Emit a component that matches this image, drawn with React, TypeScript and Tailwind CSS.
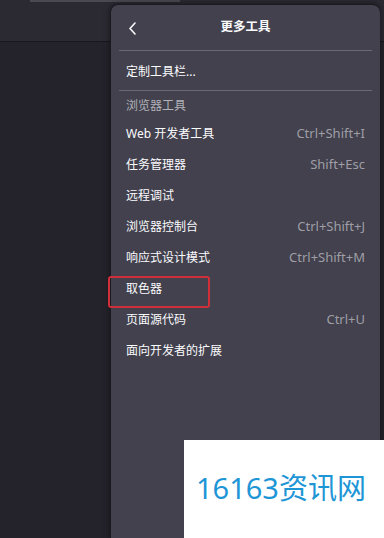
const items = [
  { label: 'Web 开发者工具', key: 'Ctrl+Shift+I' },
  { label: '任务管理器', key: 'Shift+Esc' },
  { label: '远程调试', key: '' },
  { label: '浏览器控制台', key: 'Ctrl+Shift+J' },
  { label: '响应式设计模式', key: 'Ctrl+Shift+M' },
  { label: '取色器', key: '' },
  { label: '页面源代码', key: 'Ctrl+U' },
  { label: '面向开发者的扩展', key: '' },
];

const font = "font-['Noto_Sans','Noto_Sans_CJK_SC',sans-serif]";

export default function App() {
  return (
    <div className={`relative h-[538px] w-[384px] overflow-hidden bg-[#24232b] ${font}`}>
      {/* browser chrome behind the menu */}
      <div className="flex h-full flex-col">
        <div className="relative h-[42px] border-b border-[#17161c] bg-[#2b2a33]">
          <div className="ml-[30px] h-[2px] w-[150px] bg-[#4a4951]" />
        </div>
        <div className="flex-1 bg-[#24232b]" />
      </div>

      {/* more tools panel */}
      <div className="absolute bottom-0 left-[110px] top-[4px] w-[270px] rounded-t-[8px] border-l border-t border-[#1b1a20] bg-[#42414d] text-[12px] text-[#fbfbfe] shadow-[0_0_6px_rgba(0,0,0,0.5)]">
        <div className="relative flex h-[45px] items-center justify-center">
          <svg
            className="absolute left-[17px] top-[17px]"
            width="9"
            height="13"
            viewBox="0 0 9 13"
            fill="none"
            stroke="#fbfbfe"
            strokeWidth="1.6"
            strokeLinecap="round"
            strokeLinejoin="round"
          >
            <path d="M7 1 L2 6.5 L7 12" />
          </svg>
          <span className="text-[12.5px] font-bold">更多工具</span>
        </div>
        <div className="mx-[8px] h-px bg-[#6b6a73]" />
        <div className="mt-[5px] flex h-[31px] items-center px-[15px]">定制工具栏...</div>
        <div className="mx-[8px] mt-[3px] h-px bg-[#6b6a73]" />
        <div className="flex h-[27px] items-center px-[15px] pt-[3px] text-[#b1b1b8]">浏览器工具</div>
        {items.map((item) => (
          <div key={item.label} className="flex h-[31px] items-center justify-between px-[15px]">
            <span>{item.label}</span>
            {item.key && <span className="text-[13px] text-[#9f9ea6]">{item.key}</span>}
          </div>
        ))}

        {/* highlight box */}
        <div className="absolute left-[-3px] top-[271px] h-[32px] w-[102px] rounded-[3px] border-2 border-[#cf2f39]" />
      </div>

      {/* watermark */}
      <div className="absolute bottom-0 left-[184px] top-[440px] flex w-[200px] items-center bg-white pl-[12px]">
        <span className="pb-[4px] text-[29px] font-normal leading-none text-[#1e96d6]">16163资讯网</span>
      </div>
    </div>
  );
}
